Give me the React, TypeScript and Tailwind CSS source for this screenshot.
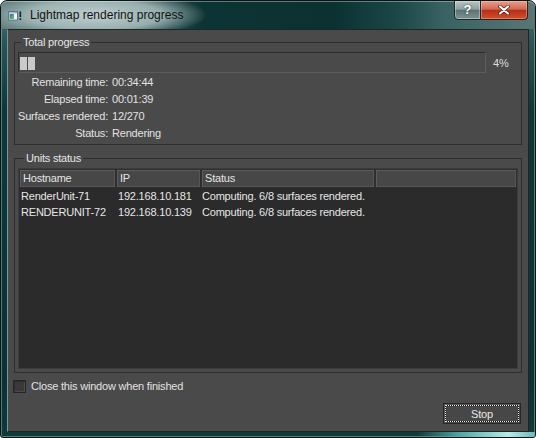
import React from "react";

const stats = [
  ["Remaining time:", "00:34:44"],
  ["Elapsed time:", "00:01:39"],
  ["Surfaces rendered:", "12/270"],
  ["Status:", "Rendering"],
];

const units = [
  { host: "RenderUnit-71", ip: "192.168.10.181", status: "Computing. 6/8 surfaces rendered." },
  { host: "RENDERUNIT-72", ip: "192.168.10.139", status: "Computing. 6/8 surfaces rendered." },
];

function AppIcon() {
  return (
    <svg width="14" height="10" viewBox="0 0 14 10">
      <defs>
        <linearGradient id="ico" x1="0" y1="0" x2="1" y2="1">
          <stop offset="0" stopColor="#2c6f8c" />
          <stop offset="1" stopColor="#78c07a" />
        </linearGradient>
      </defs>
      <rect x="0.5" y="0.5" width="9" height="8.5" fill="#f3f5f7" stroke="#5c7892" />
      <rect x="1" y="1" width="8" height="1.5" fill="#9fb4cc" />
      <rect x="1.5" y="3" width="4.5" height="5" fill="url(#ico)" />
      <rect x="11.5" y="0.5" width="1.6" height="5.5" fill="#1c2230" />
      <rect x="11.5" y="7.3" width="1.6" height="1.7" fill="#1c2230" />
    </svg>
  );
}

function TitleBar() {
  return (
    <div className="flex h-[28px] shrink-0 items-center rounded-t-[6px] bg-[image:radial-gradient(ellipse_112px_24px_at_94px_14px,rgba(196,210,210,0.97)_0%,rgba(170,190,190,0.85)_60%,rgba(120,150,150,0)_100%),linear-gradient(90deg,#617d7d_0%,#3f6464_18%,#0d3434_38%,#0b3131_62%,#1c4747_74%,#3a6262_83%,#5a7676_100%)] pl-[7px] pr-[7px] shadow-[inset_0_1px_0_rgba(255,255,255,0.35)]">
      <div className="mt-[1px]">
        <AppIcon />
      </div>
      <span className="ml-[8px] text-[12px] leading-[16px] text-[#101414]">Lightmap rendering progress</span>
      <div className="flex-1" />
      <div className="-mt-[1px] flex self-start">
        <div className="flex h-[20px] w-[27px] items-center justify-center rounded-bl-[4px] border border-[#1b2a2a] bg-[linear-gradient(180deg,#b7c4c4_0%,#90a2a2_45%,#5d7373_52%,#7e9393_100%)] pb-[1px] text-[13px] font-bold leading-none text-white shadow-[inset_0_0_0_1px_rgba(255,255,255,0.35)] [text-shadow:0_0_2px_#203030]">
          ?
        </div>
        <div className="flex h-[20px] w-[47px] items-center justify-center rounded-br-[4px] border border-l-0 border-[#3a1a14] bg-[linear-gradient(180deg,#e6a090_0%,#d26a52_45%,#b5301a_52%,#d24e2c_100%)] shadow-[inset_0_0_0_1px_rgba(255,220,200,0.35)]">
          <svg width="12" height="10" viewBox="0 0 12 10">
            <path d="M2 1.5 L10 8.5 M10 1.5 L2 8.5" stroke="#5a1a10" strokeWidth="3.6" strokeLinecap="round" />
            <path d="M2 1.5 L10 8.5 M10 1.5 L2 8.5" stroke="#ffffff" strokeWidth="2.2" strokeLinecap="round" />
          </svg>
        </div>
      </div>
    </div>
  );
}

function GroupBox({ title, className, children }: { title: string; className?: string; children: React.ReactNode }) {
  return (
    <fieldset className={"w-[508px] border border-[#2e2e2e] " + (className ?? "")}>
      <legend className="ml-[6px] px-[2px] text-[11px] leading-[14px] text-[#e6e6e6]">{title}</legend>
      {children}
    </fieldset>
  );
}

export default function App() {
  return (
    <div className="flex h-[438px] w-[536px] flex-col overflow-hidden rounded-t-[7px] rounded-b-[3px] border border-[#0a1414] bg-[linear-gradient(180deg,#5a7777_0px,#2c5555_40px,#0e3838_110px,#0b3232_380px,#103b3b_438px)] font-['Liberation_Sans',Arial,sans-serif] shadow-[inset_0_0_0_1px_rgba(190,225,225,0.4)]">
      <TitleBar />

      <div className="mx-[6px] flex flex-1 flex-col border border-[#1c2626] border-l-[#7d9696] bg-[#4a4a4a] px-[6px] text-[11px] tracking-[-0.2px] text-[#e2e2e2]">
        <GroupBox title="Total progress" className="mt-[5px] pb-[2px]">
          <div className="mt-[3px] flex items-center pl-[3px]">
            <div className="flex h-[21px] w-[468px] items-center gap-[1px] border border-t-[#2c2c2c] border-l-[#2c2c2c] border-r-[#5c5c5c] border-b-[#5c5c5c] pl-[1px] pt-[1px]">
              <div className="h-[13px] w-[7px] bg-[#cacaca]" />
              <div className="h-[13px] w-[7px] bg-[#cacaca]" />
            </div>
            <span className="ml-[7px] leading-[14px] text-[#dcdcdc]">4%</span>
          </div>
          <div className="mt-[1px]">
            {stats.map(([label, value]) => (
              <div key={label} className="flex h-[17px] items-center whitespace-nowrap leading-[17px]">
                <span className="flex w-[93px] justify-end">
                  <span>{label}</span>
                </span>
                <span className="ml-[4px]">{value}</span>
              </div>
            ))}
          </div>
        </GroupBox>

        <GroupBox title="Units status" className="mt-[6px] px-[3px] pb-[3px]">
          <div className="mt-[3px] flex h-[201px] flex-col border border-[#3c3c3c] bg-[#2b2b2b]">
            <div className="flex h-[19px] shrink-0 bg-[#4a4a4a]">
              {[
                ["Hostname", "w-[97px]"],
                ["IP", "w-[85px]"],
                ["Status", "w-[174px]"],
                ["", "flex-1"],
              ].map(([h, w], i) => (
                <div
                  key={i}
                  className={
                    w +
                    " flex items-center border border-[#2e2e2e] bg-[#474747] pl-[3px] leading-[15px] text-[#e4e4e4] shadow-[inset_1px_1px_0_#5c5c5c,inset_-1px_-1px_0_#565656]"
                  }
                >
                  {h}
                </div>
              ))}
            </div>
            {units.map((u) => (
              <div key={u.host} className="flex h-[16px] items-center whitespace-nowrap leading-[16px] text-[#e6e6e6]">
                <span className="w-[97px] pl-[2px]">{u.host}</span>
                <span className="w-[85px] pl-[2px]">{u.ip}</span>
                <span className="pl-[1px]">{u.status}</span>
              </div>
            ))}
          </div>
        </GroupBox>

        <div className="-ml-[1px] mt-[7px] flex items-center">
          <div className="h-[13px] w-[13px] border border-[#262626] bg-[#393939] shadow-[inset_1px_1px_0_#2e2e2e,inset_-1px_-1px_0_#4c4c4c]" />
          <span className="ml-[5px] leading-[13px]">Close this window when finished</span>
        </div>

        <div className="mr-[1px] mt-[10px] h-[21px] w-[78px] self-end border border-[#262626] bg-[#4b4b4b] p-[1px] shadow-[inset_1px_1px_0_#5a5a5a]">
          <div className="h-full w-full bg-[#111111]">
            <div className="flex h-full w-full items-center justify-center border border-dotted border-[#ececec] bg-[#474747] bg-clip-padding leading-[14px] text-[#e8e8e8]">
              Stop
            </div>
          </div>
        </div>
      </div>

      <div className="h-[5px] shrink-0 bg-[linear-gradient(90deg,rgba(0,0,0,0)_0%,rgba(0,0,0,0)_78%,#4fa9a6_86%,#b5ecea_95%,#6fb9b6_100%)]" />
    </div>
  );
}
